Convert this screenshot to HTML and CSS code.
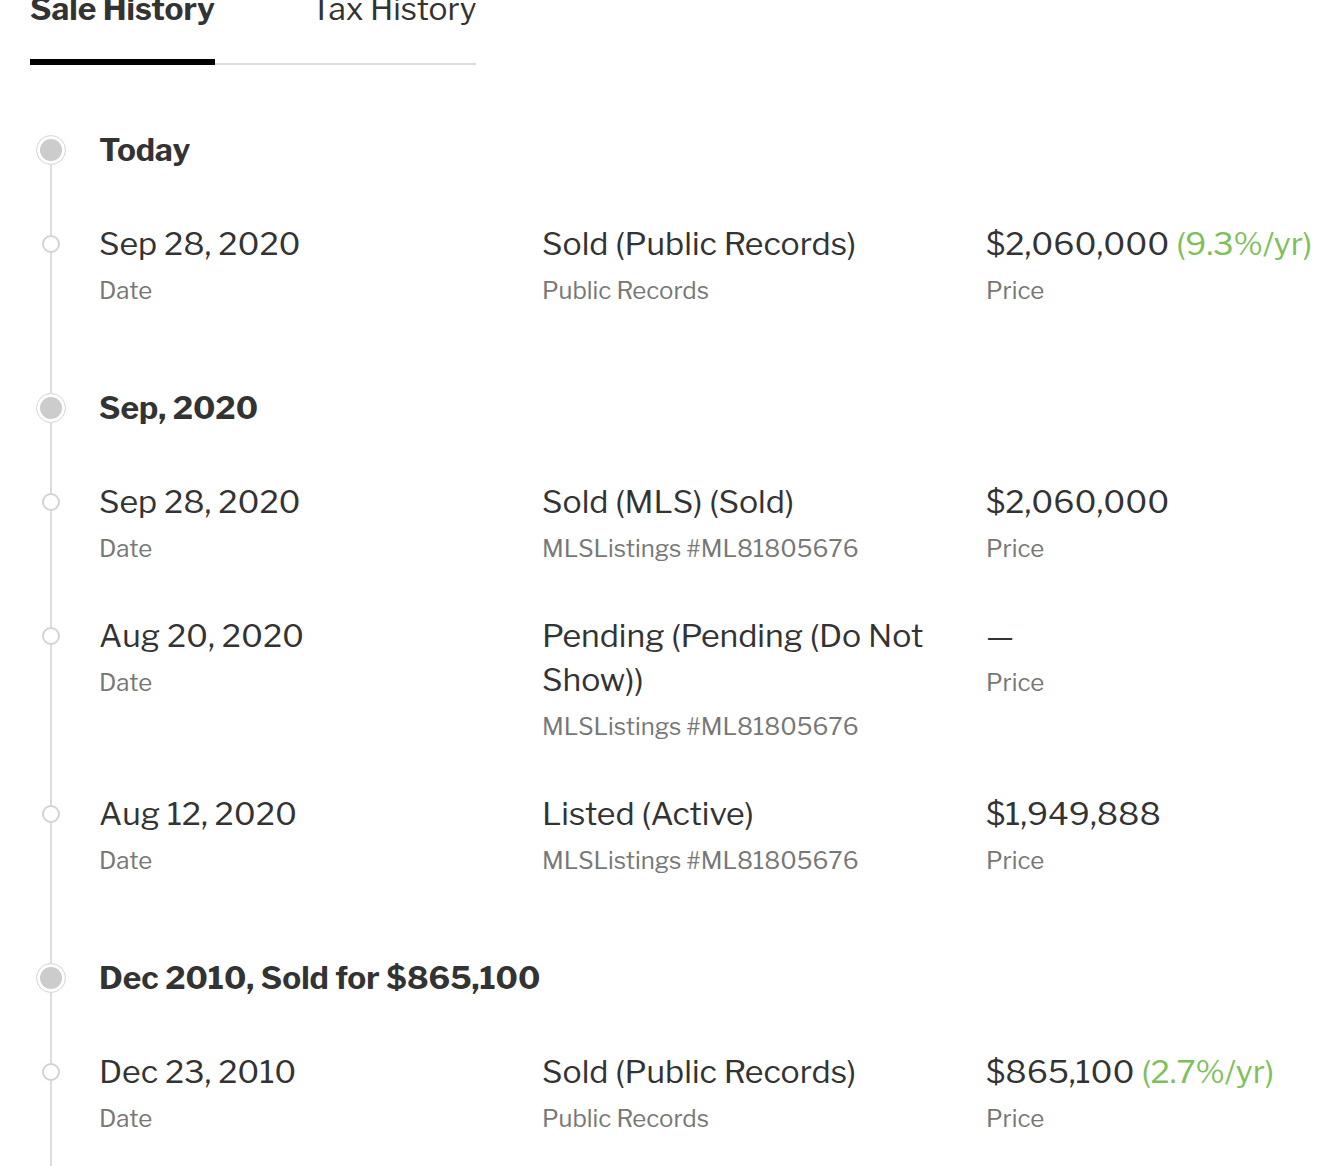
FILE: index.html
```html
<!DOCTYPE html>
<html lang="en">
<head>
<meta charset="utf-8">
<title>Sale History</title>
<link rel="stylesheet" href="styles.css">
</head>
<body>
<div class="tabs">
  <div class="tab tab-active">Sale History</div>
  <div class="tab">Tax History</div>
</div>

<div class="timeline">
  <div class="group">
    <div class="group-head">Today</div>
    <div class="row">
      <div class="cell"><div class="main">Sep 28, 2020</div><div class="sub">Date</div></div>
      <div class="cell"><div class="main">Sold (Public Records)</div><div class="sub">Public Records</div></div>
      <div class="cell cell-price"><div class="main">$2,060,000 <span class="gain">(9.3%/yr)</span></div><div class="sub">Price</div></div>
    </div>
  </div>

  <div class="group">
    <div class="group-head">Sep, 2020</div>
    <div class="row">
      <div class="cell"><div class="main">Sep 28, 2020</div><div class="sub">Date</div></div>
      <div class="cell"><div class="main">Sold (MLS) (Sold)</div><div class="sub">MLSListings #ML81805676</div></div>
      <div class="cell cell-price"><div class="main">$2,060,000</div><div class="sub">Price</div></div>
    </div>
    <div class="row">
      <div class="cell"><div class="main">Aug 20, 2020</div><div class="sub">Date</div></div>
      <div class="cell"><div class="main">Pending (Pending (Do Not Show))</div><div class="sub">MLSListings #ML81805676</div></div>
      <div class="cell cell-price"><div class="main">—</div><div class="sub">Price</div></div>
    </div>
    <div class="row">
      <div class="cell"><div class="main">Aug 12, 2020</div><div class="sub">Date</div></div>
      <div class="cell"><div class="main">Listed (Active)</div><div class="sub">MLSListings #ML81805676</div></div>
      <div class="cell cell-price"><div class="main">$1,949,888</div><div class="sub">Price</div></div>
    </div>
  </div>

  <div class="group">
    <div class="group-head">Dec 2010, Sold for $865,100</div>
    <div class="row">
      <div class="cell"><div class="main">Dec 23, 2010</div><div class="sub">Date</div></div>
      <div class="cell"><div class="main">Sold (Public Records)</div><div class="sub">Public Records</div></div>
      <div class="cell cell-price"><div class="main">$865,100 <span class="gain">(2.7%/yr)</span></div><div class="sub">Price</div></div>
    </div>
  </div>
</div>
</body>
</html>
```

FILE: styles.css
```css
html, body {
  margin: 0;
  padding: 0;
  background: #fff;
  overflow: hidden;
}

body {
  font-family: "Libre Franklin", Lato, "Noto Sans", Arial, sans-serif;
  color: #333;
  height: 1166px;
}

.tabs {
  display: flex;
  width: fit-content;
  margin-left: 30px;
  margin-top: -6px;
  border-bottom: 2px solid #ddd;
}

.tab {
  font-size: 31.7px;
  line-height: 30px;
  padding-bottom: 35px;
  border-bottom: 6px solid transparent;
  margin-bottom: -2px;
  color: #333;
}

.tab + .tab {
  margin-left: 96px;
}

.tab-active {
  font-weight: 700;
  border-bottom-color: #000;
}

.timeline {
  position: relative;
  margin-top: 65px;
  padding-left: 99px;
}

.timeline::before {
  content: "";
  position: absolute;
  left: 50px;
  width: 2px;
  top: 20px;
  height: 1200px;
  background: #ddd;
}

.group + .group {
  margin-top: 32px;
}

.group-head {
  position: relative;
  font-size: 31.6px;
  font-weight: 700;
  line-height: 40px;
  margin-bottom: 52px;
}

.group-head::before {
  content: "";
  position: absolute;
  left: -63px;
  top: 5px;
  width: 28px;
  height: 28px;
  border: 1px solid #ddd;
  border-radius: 50%;
  background: #ccc;
  box-shadow: inset 0 0 0 3px #fff;
}

.row {
  position: relative;
  display: grid;
  grid-template-columns: 443px 444px 1fr;
  padding-bottom: 50px;
}

.row::before {
  content: "";
  position: absolute;
  left: -57px;
  top: 13px;
  width: 14px;
  height: 14px;
  border: 2px solid #d3d3d3;
  border-radius: 50%;
  background: #fff;
}

.cell {
  padding-right: 16px;
}

.cell-price {
  padding-right: 0;
  white-space: nowrap;
}

.main {
  font-size: 32px;
  line-height: 44px;
  color: #333;
}

.sub {
  font-size: 24px;
  line-height: 30px;
  margin-top: 10px;
  color: #777;
}

.gain {
  color: #7dc05a;
}
```
